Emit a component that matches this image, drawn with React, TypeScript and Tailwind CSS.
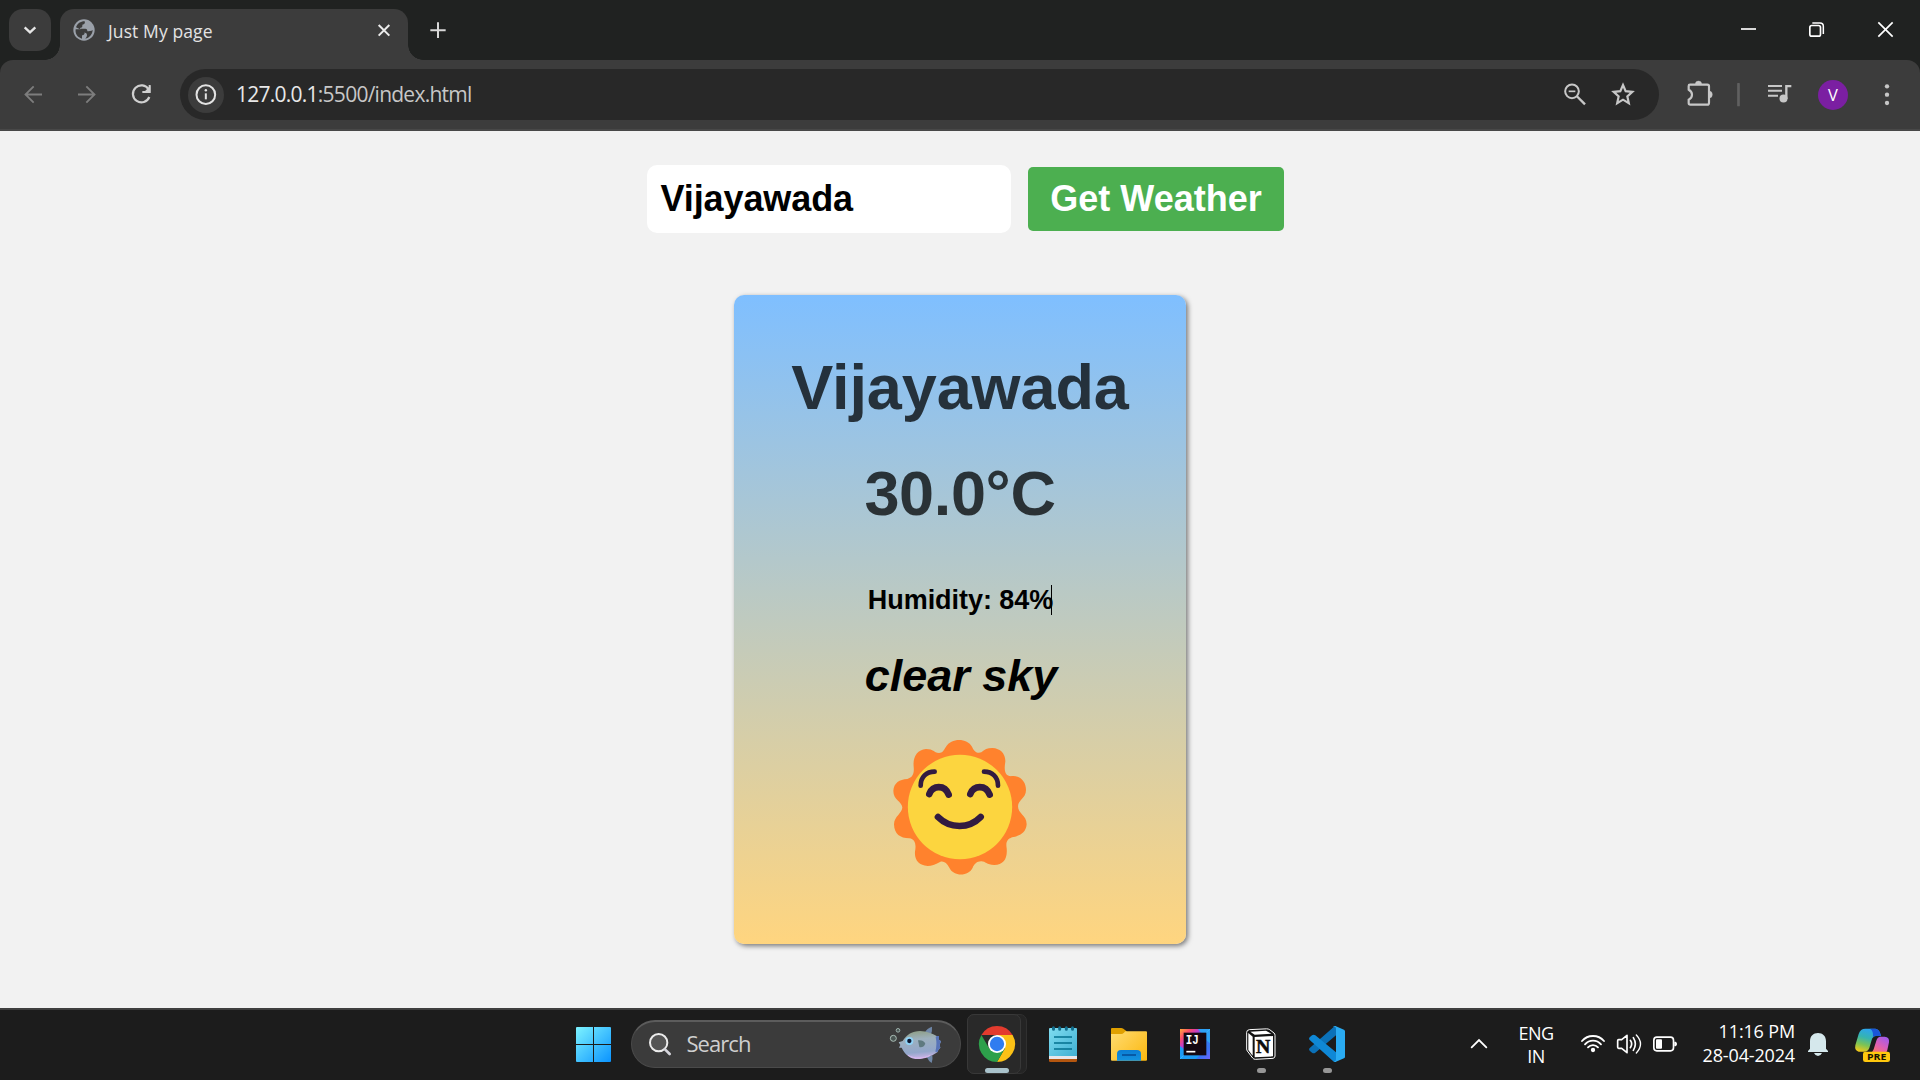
import type { ReactNode } from "react";

/** Icon drawn on a grid of three units to the pixel. */
function Glyph({ box, className = "", children }: { box: [number, number, number, number]; className?: string; children: ReactNode }) {
  return (
    <svg
      viewBox={box.join(" ")}
      width={box[2] / 3}
      height={box[3] / 3}
      fill="none"
      className={`block shrink-0 ${className}`}
    >
      {children}
    </svg>
  );
}

const ui = "font-['Open_Sans','Noto_Sans',sans-serif]";

function TabStrip() {
  return (
    <div className="flex h-[60px] w-full bg-[#202221]">
      <div className="ml-[9px] mt-[9px] h-[42px] w-[42px] rounded-[14px] bg-[#3c3c3c]">
        <Glyph box={[27, 27, 126, 126]}>
          <path d="M74 82 L90 97 L106 82" stroke="#e6e6e6" strokeWidth="7" />
        </Glyph>
      </div>
      <div className="ml-[-6px] mt-[45px] h-[15px] w-[15px] bg-[radial-gradient(circle_at_0_0,transparent_14.5px,#3c3c3c_15px)]" />
      <div className="mt-[9px] flex h-[51px] w-[348px] rounded-t-[14px] bg-[#3c3c3c]">
        <Glyph box={[216, 27, 72, 153]} className="ml-[12px]">
          <circle cx="252" cy="90" r="32" fill="#9aa0a9" />
          <path d="M227 88 L243 88 C251 89 254 93 254 98 C254 104 249 106 246 106 L246 116 C233 113 225 102 227 88Z" fill="#3c3c3c" />
          <path d="M254 64 C256 68 254 74 247 74 L247 79 C247 83 243 84 240 84 L240 86 L256 86 C261 86 262 89 262 94 C266 94 274 93 278 90 C277 104 268 114 256 116 C262 110 262 104 259 100 L255 98 L240 88 L228 82 C232 71 241 64 254 64Z" fill="#3c3c3c" />
        </Glyph>
        <span className={`${ui} ml-[12px] mt-[10px] h-[24px] w-[264px] whitespace-nowrap text-[17.5px] leading-[24px] tracking-[0.1px] text-[#e3e3e3]`}>
          Just My page
        </span>
        <Glyph box={[1110, 27, 84, 153]} className="ml-[-2px]">
          <path d="M1136 75 L1168 107 M1168 75 L1136 107" stroke="#ececec" strokeWidth="6" />
        </Glyph>
      </div>
      <div className="mt-[45px] h-[15px] w-[15px] bg-[radial-gradient(circle_at_100%_0,transparent_14.5px,#3c3c3c_15px)]" />
      <Glyph box={[1284, 0, 60, 180]} className="ml-[5px]">
        <path d="M1291 90.500 H1337 M1314 67 V114" stroke="#d8d8d8" strokeWidth="6" />
      </Glyph>
      <Glyph box={[630, 0, 108, 180]} className="ml-auto">
        <path d="M663 87 H708" stroke="#fff" strokeWidth="5" />
      </Glyph>
      <Glyph box={[840, 0, 102, 180]} className="ml-[34px]">
        <rect x="869.500" y="76.500" width="32" height="32" rx="6" stroke="#fff" strokeWidth="5" />
        <path d="M877 69 H900 Q910 69 910 79 V102" stroke="#fff" strokeWidth="4.500" />
      </Glyph>
      <Glyph box={[1050, 0, 150, 180]} className="ml-[36px]">
        <path d="M1075 67 L1118 110 M1118 67 L1075 110" stroke="#fff" strokeWidth="5" />
      </Glyph>
    </div>
  );
}

function Toolbar() {
  return (
    <div className="bg-[#202221]">
      <div className="flex h-[71px] rounded-t-[13px] border-b-2 border-[#484848] bg-[#3c3c3c]">
        <Glyph box={[60, 180, 78, 207]} className="ml-[20px]">
          <path d="M126 283.500 H78 M101 259 L76.500 283.500 L101 308" stroke="#7d7d7d" strokeWidth="5.500" />
        </Glyph>
        <Glyph box={[225, 180, 72, 207]} className="ml-[29px]">
          <path d="M234 283.500 H282 M259 259 L283.500 283.500 L259 308" stroke="#7d7d7d" strokeWidth="5.500" />
        </Glyph>
        <Glyph box={[384, 180, 78, 207]} className="ml-[29px]">
          <path d="M446 268 A25.500 25.500 0 1 0 448 291" stroke="#d0d0d0" strokeWidth="6.500" />
          <path d="M449 255 V276 H427" stroke="#d0d0d0" strokeWidth="6" />
          <path d="M451 257 V278 H430Z" fill="#d0d0d0" />
        </Glyph>
        <div className="ml-[26px] mt-[9px] flex h-[51px] w-[1479px] rounded-full bg-[#282828]">
          <div className="ml-[8px] mt-[8px] h-[36px] w-[36px] rounded-full bg-[#3c3c3c]">
            <Glyph box={[563, 231, 108, 108]}>
              <circle cx="616.500" cy="284" r="28" stroke="#e3e3e3" strokeWidth="6" />
              <path d="M616.500 280 V298" stroke="#e3e3e3" strokeWidth="6" />
              <circle cx="616.500" cy="271" r="3.700" fill="#e3e3e3" />
            </Glyph>
          </div>
          <span className={`${ui} ml-[12px] mt-[11px] h-[28px] whitespace-nowrap text-[21px] leading-[28px] tracking-[-0.75px] text-[#c7c7c7]`}>
            <span className="text-[#e8e8e8]">127.0.0.1</span>:5500/index.html
          </span>
          <Glyph box={[120, 207, 90, 153]} className="ml-auto">
            <circle cx="156" cy="274" r="20.500" stroke="#c7c7c7" strokeWidth="6" />
            <path d="M170 288 L195 313" stroke="#c7c7c7" strokeWidth="7" />
            <path d="M146 274 H166" stroke="#c7c7c7" strokeWidth="5" />
          </Glyph>
          <Glyph box={[264, 207, 90, 153]} className="ml-[18px] mr-[21px]">
            <path d="M309 255 L317 273.500 L337 275.500 L322 289 L326.500 309.500 L309 299 L291.500 309.500 L296 289 L281 275.500 L301 273.500Z" stroke="#c7c7c7" strokeWidth="6.500" />
          </Glyph>
        </div>
        <Glyph box={[492, 180, 93, 207]} className="ml-[25px]">
          <path d="M510 254 H562 Q567 254 567 259 V308 Q567 314 562 314 H511 Q506 314 506 309 V299 Q516 294 516 284 Q516 274 506 269 V258 Q506 254 510 254Z" stroke="#c7c7c7" strokeWidth="6.500" />
          <path d="M526 253 A9.500 10 0 0 1 545 253Z M567 273 A10 10.500 0 0 1 567 294Z" fill="#c7c7c7" stroke="#c7c7c7" strokeWidth="1" />
        </Glyph>
        <Glyph box={[645, 180, 21, 207]} className="ml-[20px]">
          <rect x="651.500" y="249" width="8" height="70" rx="2" fill="#606060" />
        </Glyph>
        <Glyph box={[735, 180, 90, 207]} className="ml-[23px]">
          <path d="M744 258 H786 M744 272.500 H786 M744 287 H774" stroke="#c7c7c7" strokeWidth="6" />
          <circle cx="790.500" cy="295.500" r="12" fill="#c7c7c7" />
          <path d="M799 297 V258.500 H814" stroke="#c7c7c7" strokeWidth="7" />
        </Glyph>
        <div className={`${ui} ml-[23px] mt-[20px] flex h-[30px] w-[30px] items-center justify-center rounded-full bg-[#7b1fa2] text-[16.5px] leading-none text-white`}>
          V
        </div>
        <Glyph box={[1086, 180, 30, 207]} className="ml-[34px]">
          <circle cx="1101" cy="259" r="6.500" fill="#c7c7c7" />
          <circle cx="1101" cy="284" r="6.500" fill="#c7c7c7" />
          <circle cx="1101" cy="309" r="6.500" fill="#c7c7c7" />
        </Glyph>
      </div>
    </div>
  );
}

function Sun() {
  return (
    <Glyph box={[0, 0, 480, 450]}>
      <path
        d="M198 50 C213 23 262 23 276 50 C283 66 291 70 304 67 C313 58 322 54 337 54 C362 55 377 72 376 95 C372 118 374 134 388 138 C393 139 395 138 400 138 C424 139 438 158 438 180 C438 205 414 209 414 229 C414 252 440 255 440 283 C438 308 420 318 396 322 C381 328 377 337 380 355 C383 387 370 404 343 405 C318 405 317 393 303 394 C290 394 283 403 278 413 C266 440 220 440 208 413 C200 398 190 392 180 396 C165 404 155 408 143 408 C117 406 103 390 105 365 C109 345 106 327 88 325 C60 325 43 312 42 283 C43 258 67 250 67 232 C65 213 40 210 40 182 C42 158 58 149 82 147 C99 142 103 130 101 110 C98 80 112 59 138 57 C162 57 160 68 177 69 C188 68 191 61 198 50Z"
        fill="#ff822d"
      />
      <circle cx="240" cy="231" r="156.500" fill="#fcd53f" />
      <g stroke="#321b41" strokeLinecap="round">
        <path d="M122 167 C122 141 139 125 164 125" strokeWidth="14" />
        <path d="M312 125 C337 125 354 141 354 167" strokeWidth="14" />
        <path d="M148 192 C157 165 195 163 206 194" strokeWidth="20" />
        <path d="M271 192 C280 165 318 163 329 194" strokeWidth="20" />
        <path d="M174 261 C210 297 267 297 302 261" strokeWidth="20" />
      </g>
    </Glyph>
  );
}

function WeatherPage() {
  return (
    <div className="flex h-[877px] flex-col items-center bg-[#f2f2f2] font-['Liberation_Sans',Arial,sans-serif] font-bold">
      <div className="ml-[11px] mt-[34px] flex h-[68px] items-center">
        <div className="flex h-[68px] w-[364px] items-center rounded-[10px] bg-white pl-[13.5px] pb-px text-[36px] leading-none tracking-[-0.1px] text-black">
          Vijayawada
        </div>
        <button className="ml-[17px] h-[64px] w-[256px] rounded-[5px] bg-[#4caf50] pb-px text-[36px] leading-none text-white">
          Get Weather
        </button>
      </div>
      <div className="mt-[62px] flex h-[649px] w-[452px] flex-col items-center rounded-[10px] bg-[linear-gradient(180deg,#7fbfff,#ffd57f)] shadow-[2px_2px_5px_rgba(0,0,0,0.5)]">
        <h1 className="mt-[56px] h-[72px] whitespace-nowrap text-[63px] leading-[72px] tracking-[-0.1px] text-black/75">Vijayawada</h1>
        <p className="mt-[34px] h-[72px] whitespace-nowrap text-[63px] leading-[72px] tracking-[-0.35px] text-black/75">30.0°C</p>
        <p className="mt-[56px] flex h-[30px] items-center whitespace-nowrap text-[27px] leading-[30px] tracking-[-0.05px] text-black">
          Humidity: 84%<span className="-ml-[2px] h-[30px] w-px bg-black" />
        </p>
        <p className="ml-[2px] mt-[35px] h-[52px] whitespace-nowrap text-[45px] italic leading-[52px] text-black">clear sky</p>
        <div className="mt-[28px] flex w-[160px]">
          <Sun />
        </div>
      </div>
    </div>
  );
}

function Taskbar() {
  return (
    <div className="flex h-[72px] border-t-2 border-[#3f3f3f] bg-[#1c1c1c]">
      <Glyph box={[48, 30, 105, 210]} className="ml-[576px]">
        <defs>
          <linearGradient id="win" x1="48" y1="81" x2="153" y2="186" gradientUnits="userSpaceOnUse">
            <stop stopColor="#7df3ff" />
            <stop offset="1" stopColor="#0a93ff" />
          </linearGradient>
        </defs>
        <path
          d="M51 81 H99 V132 H48 V84 Q48 81 51 81Z M102 81 H150 Q153 81 153 84 V132 H102Z M48 135 H99 V186 H51 Q48 186 48 183Z M102 135 H153 V183 Q153 186 150 186 H102Z"
          fill="url(#win)"
        />
      </Glyph>
      <div className="ml-[20px] mt-[10px] flex h-[48px] w-[330px] rounded-full border border-[#4a4a4a] border-t-2 border-t-[#5c5c5c] bg-[#3b3b3b]">
        <Glyph box={[258, 66, 84, 135]} className="ml-[14px]">
          <circle cx="296" cy="128" r="26" fill="#555" stroke="#ececec" strokeWidth="6" />
          <path d="M315 148 L329 162" stroke="#d5d5dc" strokeWidth="8" strokeLinecap="round" />
        </Glyph>
        <span className={`${ui} ml-[12.5px] mt-[7px] h-[28px] text-[22px] leading-[28px] tracking-[-0.95px] text-[#cfcfcf]`}>Search</span>
        <Glyph box={[984, 66, 168, 135]} className="ml-auto mr-[16px]">
          <defs>
            <linearGradient id="fish" x1="1070" y1="92" x2="1078" y2="178" gradientUnits="userSpaceOnUse">
              <stop stopColor="#8f9f86" />
              <stop offset="0.3" stopColor="#9db0bd" />
              <stop offset="0.75" stopColor="#93a7cb" />
              <stop offset="1" stopColor="#d3b6ea" />
            </linearGradient>
          </defs>
          <path d="M1094 98 Q1101 84 1116 80 Q1117 92 1113 104Z M1100 170 Q1106 184 1115 189 Q1119 178 1117 166Z" fill="#6f87a8" />
          <path d="M1016 127 L1028 123 C1040 104 1057 93 1080 93 C1100 94 1118 101 1130 108 L1137 108 L1137 119 L1143 124 L1139 134 L1141 143 L1135 150 L1133 156 C1112 170 1090 179 1066 177 C1046 173 1034 162 1025 143 L1017 143 L1021 135Z" fill="url(#fish)" />
          <path d="M1130 108 L1137 108 L1137 119 L1143 124 L1139 134 L1141 143 L1135 150 L1133 156 L1126 155 Q1132 132 1127 112Z" fill="#5874b8" />
          <circle cx="1048" cy="123" r="12" fill="#8fd3f7" />
          <circle cx="1048" cy="123" r="6.500" fill="#0c1630" />
          <path d="M1074 121 Q1090 119 1096 131 Q1090 144 1078 141Z" fill="#5f7a80" />
          <path d="M1044 166 C1064 178 1090 176 1110 166" stroke="#d9b8ee" strokeWidth="3" />
          <circle cx="1000" cy="115" r="9" fill="#4a5552" stroke="#a9bdb5" strokeWidth="3" />
          <circle cx="1014" cy="91" r="5.500" fill="#4a5552" stroke="#9db1ac" strokeWidth="3" />
        </Glyph>
      </div>

      <div className="ml-[6px] mt-[4px] h-[60px] w-[60px] rounded-[7px] border border-[#303030] bg-[#242424]">
        <div className="-ml-px -mt-px h-[60px] w-[54px] rounded-[7px] border border-[#383838] bg-[#292929]">
          <Glyph box={[24, 45, 156, 174]}>
            <path d="M64.200 105 A54 54 0 0 1 157.800 105 H111Z" fill="#e33b2e" />
            <path d="M157.800 105 A54 54 0 0 1 111 186 L134.400 145.500 L111 105Z" fill="#fbc116" />
            <path d="M64.200 105 A54 54 0 0 0 111 186 L134.400 145.500 H111 L87.600 145.500Z" fill="#2da04b" />
            <circle cx="111" cy="132" r="27" fill="#fff" />
            <circle cx="111" cy="132" r="21.500" fill="#2f7cf0" />
            <rect x="75" y="204" width="72" height="15" rx="7.500" fill="#a9c2cb" />
          </Glyph>
        </div>
      </div>

      <Glyph box={[264, 30, 90, 210]} className="ml-[21px]">
        <defs>
          <linearGradient id="note" x1="267" y1="84" x2="351" y2="168" gradientUnits="userSpaceOnUse">
            <stop stopColor="#7fdcf0" />
            <stop offset="1" stopColor="#3fb0d3" />
          </linearGradient>
        </defs>
        <path d="M267 165 H351 V182 Q351 186 347 186 H271 Q267 186 267 182Z" fill="#b4560f" />
        <path d="M267 160 H351 V177 H267Z" fill="#e6e6ea" />
        <path d="M270 84 H348 Q351 84 351 87 V168 H267 V87 Q267 84 270 84Z" fill="url(#note)" />
        <path d="M282 111 H336 M282 129 H336 M282 147 H336" stroke="#03708f" strokeWidth="5" />
        <path d="M280.500 83 V88 M299 83 V88 M319 83 V88 M337.500 83 V88" stroke="#126e8d" strokeWidth="9" strokeLinecap="round" />
      </Glyph>
      <Glyph box={[453, 30, 108, 210]} className="ml-[33px]">
        <defs>
          <linearGradient id="fold" x1="460" y1="94" x2="550" y2="182" gradientUnits="userSpaceOnUse">
            <stop stopColor="#ffdb6e" />
            <stop offset="1" stopColor="#fbb914" />
          </linearGradient>
          <linearGradient id="pocket" x1="507" y1="150" x2="507" y2="182" gradientUnits="userSpaceOnUse">
            <stop stopColor="#0b7dd4" />
            <stop offset="1" stopColor="#1493df" />
          </linearGradient>
        </defs>
        <path d="M453 87 Q453 84 456 84 H484 Q487 84 490 86 L500 94 V110 H453Z" fill="#e0a000" />
        <path d="M453 102 H484 Q488 102 491 99 L496 94 H558 Q561 94 561 97 V179 Q561 182 558 182 H456 Q453 182 453 179Z" fill="url(#fold)" />
        <path d="M471 182 V162 Q471 150 483 150 H531 Q543 150 543 162 V182Z" fill="url(#pocket)" />
        <path d="M486 165 H528" stroke="#07509b" strokeWidth="5" />
      </Glyph>
      <Glyph box={[660, 30, 90, 210]} className="ml-[33px]">
        <defs>
          <linearGradient id="ij" x1="660" y1="87" x2="750" y2="177" gradientUnits="userSpaceOnUse">
            <stop stopColor="#ffab3a" />
            <stop offset="0.18" stopColor="#fb4a6a" />
            <stop offset="0.32" stopColor="#c23cc8" />
            <stop offset="0.48" stopColor="#2b82f5" />
            <stop offset="0.8" stopColor="#3a72f5" />
            <stop offset="1" stopColor="#6f62ff" />
          </linearGradient>
        </defs>
        <rect x="660" y="87" width="90" height="90" fill="url(#ij)" />
        <path d="M660 138 L672 148 V165 H720 L708 177 H660Z" fill="#1d9bf5" />
        <path d="M714 87 H750 V130 L738 120 V99 H724Z" fill="#2ea0f6" />
        <path d="M660 177 L671 166 M739 98 L750 87" stroke="#35b4ff" strokeWidth="3" />
        <rect x="671" y="98" width="68" height="68" fill="#140812" />
        <text x="677" y="131" fontFamily="Liberation Mono, monospace" fontWeight="700" fontSize="38" textLength="39" lengthAdjust="spacingAndGlyphs" fill="#fff">IJ</text>
        <path d="M679 155 H706" stroke="#fff" strokeWidth="5" />
      </Glyph>
      <Glyph box={[855, 30, 96, 210]} className="ml-[35px]">
        <path d="M868 89 L920 86.500 Q925 86.500 929 89 L942 99 Q945 102 945 106 V168 Q945 174 939 175 L886 178 Q881 178 878 174 L862 153 Q860 150 860 147 V97 Q860 90 868 89Z" fill="#111" stroke="#fff" strokeWidth="3" />
        <path d="M871 95 L918 92.500 L934 101 L884 104Z" fill="#fff" />
        <path d="M865 99 L878 110 V167 L865 150Z" fill="#fff" />
        <path d="M884 111 L939 108 V169 L884 172Z" fill="#fff" />
        <text x="888" y="159" fontFamily="Liberation Serif, serif" fontWeight="700" fontSize="56" textLength="43" lengthAdjust="spacingAndGlyphs" fill="#0d0d0d" stroke="#0d0d0d" strokeWidth="1.500">N</text>
        <rect x="891" y="204" width="27" height="15" rx="7.500" fill="#969696" />
      </Glyph>
      <Glyph box={[1047, 30, 108, 210]} className="ml-[32px]">
        <path d="M1128 78 V106 L1066 158 Q1061 162 1056 158 L1049 152 Q1045 147 1050 143 L1121 81 Q1124 78 1128 78Z" fill="#0b71b8" />
        <path d="M1128 186 V157 L1066 106 Q1061 102 1056 106 L1049 112 Q1045 117 1050 121 L1118 182 Q1122 186 1128 186Z" fill="#0f88d6" />
        <path d="M1126 78 L1152 89 Q1155 91 1155 94 V170 Q1155 173 1152 175 L1126 186 Q1122 186 1119 183 Q1128 186 1128 178 V86 Q1128 78 1119 81 Q1122 77 1126 78Z" fill="#2aabf2" />
        <rect x="1089" y="204" width="27" height="15" rx="7.500" fill="#969696" />
      </Glyph>

      <Glyph box={[90, 30, 54, 210]} className="ml-[125px]">
        <path d="M95 142 L117 120 L139 142" stroke="#fff" strokeWidth="5.500" strokeLinecap="round" />
      </Glyph>
      <div className={`${ui} ml-[25px] mt-[12px] w-[46px] text-center text-[18px] leading-[23px] tracking-[-0.5px] text-white`}>
        <div>ENG</div>
        <div>IN</div>
      </div>
      <Glyph box={[420, 30, 78, 210]} className="ml-[21px]">
        <g stroke="#fff" strokeWidth="5.500" strokeLinecap="round">
          <path d="M426 123 C443 103 475 103 492 123" />
          <path d="M435 133 C448 118 470 118 483 133" />
          <path d="M444 142 C452 133 466 133 474 142" />
        </g>
        <circle cx="459" cy="150" r="6.500" fill="#fff" />
      </Glyph>
      <Glyph box={[528, 30, 78, 210]} className="ml-[10px]">
        <g stroke="#fff" strokeWidth="5" strokeLinecap="round" strokeLinejoin="round">
          <path d="M533 122 Q533 119 536 119 H545 L561 106 V158 L545 145 H536 Q533 145 533 142Z" />
          <path d="M571 121 Q579 132 571 143" />
          <path d="M580 113 Q592 132 580 151" />
          <path d="M589 105 Q614 132 589 159" strokeWidth="4" />
        </g>
      </Glyph>
      <Glyph box={[636, 30, 78, 210]} className="ml-[10px]">
        <rect x="641.500" y="111.500" width="59" height="41" rx="9" stroke="#fff" strokeWidth="5" />
        <rect x="648" y="118" width="18" height="28" rx="3" fill="#fff" />
        <path d="M703 125 H707 Q711 128 711 132 Q711 136 707 139 H703Z" fill="#fff" />
      </Glyph>
      <div className={`${ui} ml-[16px] mt-[9px] w-[101px] whitespace-nowrap text-right text-[18px] leading-[24px] tracking-[-0.15px] text-white`}>
        <div>11:16 PM</div>
        <div>28-04-2024</div>
      </div>
      <Glyph box={[1101, 30, 66, 210]} className="ml-[12px]">
        <path d="M1104 156 V153 L1110 146 V124 C1110 108 1120 99 1134 99 C1148 99 1158 108 1158 124 V146 L1164 153 V156Z" fill="#d5e8ec" />
        <path d="M1122 159 H1146 Q1142 168 1134 168 Q1126 168 1122 159Z" fill="#d5e8ec" />
      </Glyph>
      <Glyph box={[1242, 30, 111, 210]} className="ml-[25px]">
        <defs>
          <linearGradient id="cpa" x1="1285" y1="84" x2="1265" y2="156" gradientUnits="userSpaceOnUse">
            <stop stopColor="#2ba2f5" />
            <stop offset="0.4" stopColor="#35b4b0" />
            <stop offset="0.7" stopColor="#7cc355" />
            <stop offset="1" stopColor="#f3c818" />
          </linearGradient>
          <linearGradient id="cpb" x1="1338" y1="110" x2="1305" y2="165" gradientUnits="userSpaceOnUse">
            <stop stopColor="#a05bee" />
            <stop offset="0.5" stopColor="#dd5fb6" />
            <stop offset="1" stopColor="#ff7a58" />
          </linearGradient>
        </defs>
        <path d="M1276 86 H1306 Q1316 87 1320 98 L1323 108 H1308 Q1298 109 1295 120 L1288 144 Q1284 155 1273 155 H1256 Q1243 152 1246 136 L1256 102 Q1261 86 1276 86Z" fill="url(#cpa)" />
        <path d="M1290 86 H1306 Q1316 87 1320 98 L1323 108 H1308 Q1302 108 1299 112 Q1301 92 1290 86Z" fill="#1a56d8" />
        <path d="M1320 110 H1334 Q1349 111 1347 127 L1342 150 Q1340 160 1328 162 H1288 Q1298 158 1301 148 L1309 122 Q1312 111 1320 110Z" fill="url(#cpb)" />
        <rect x="1269" y="155" width="81" height="31" rx="7" fill="#ffc80e" />
        <text x="1281" y="180" fontFamily="Open Sans, sans-serif" fontWeight="700" fontSize="28" textLength="58" lengthAdjust="spacingAndGlyphs" fill="#1a1400">PRE</text>
      </Glyph>
    </div>
  );
}

export default function App() {
  return (
    <div className="flex h-[1080px] w-[1920px] flex-col overflow-hidden">
      <TabStrip />
      <Toolbar />
      <WeatherPage />
      <Taskbar />
    </div>
  );
}
